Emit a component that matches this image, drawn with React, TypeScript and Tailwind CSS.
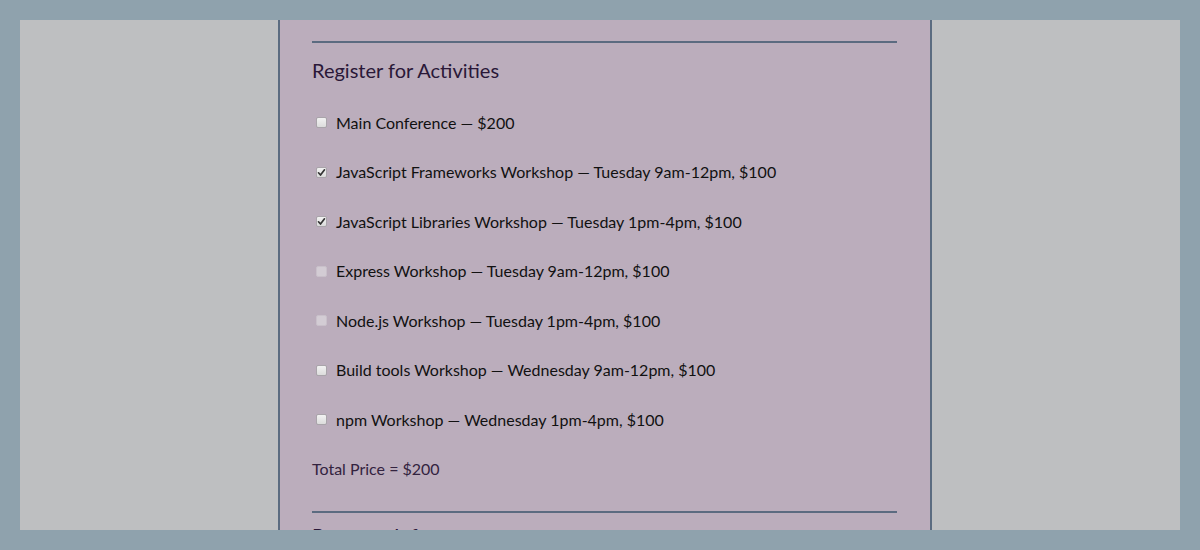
import React from "react";

const items: { label: string; checked?: boolean; disabled?: boolean }[] = [
  { label: "Main Conference — $200" },
  { label: "JavaScript Frameworks Workshop — Tuesday 9am-12pm, $100", checked: true },
  { label: "JavaScript Libraries Workshop — Tuesday 1pm-4pm, $100", checked: true },
  { label: "Express Workshop — Tuesday 9am-12pm, $100", disabled: true },
  { label: "Node.js Workshop — Tuesday 1pm-4pm, $100", disabled: true },
  { label: "Build tools Workshop — Wednesday 9am-12pm, $100" },
  { label: "npm Workshop — Wednesday 1pm-4pm, $100" },
];

function Box({ checked, disabled }: { checked?: boolean; disabled?: boolean }) {
  return (
    <span
      className={
        "relative flex h-[11px] w-[11px] shrink-0 items-center justify-center rounded-[2px] border " +
        (disabled
          ? "border-[#c9c0ca] bg-[#d3ccd4]"
          : "border-[#a9a4aa] bg-gradient-to-b from-[#f2f2f2] to-[#dcdcdc]")
      }
    >
      {checked && (
        <svg width="9" height="9" viewBox="0 0 9 9" className="block">
          <path d="M1.5 4.8 L3.5 7 L7.5 1.8" stroke="#333" strokeWidth="1.7" fill="none" strokeLinecap="round" strokeLinejoin="round" />
        </svg>
      )}
    </span>
  );
}

export default function App() {
  return (
    <div
      className="h-[550px] w-[1200px] overflow-hidden bg-[#8fa2ad] p-[20px]"
      style={{ fontFamily: "Lato, 'Open Sans', sans-serif" }}
    >
      <div className="flex h-full justify-center overflow-hidden bg-[#bebfc1] pl-[258px] pr-[248px]">
        <div className="w-[654px] shrink-0 border-x-2 border-[#5b6b80] bg-[#bbadbc] px-[32px] pt-[21px]">
          <div className="mr-[1px] h-[2px] bg-[#5b6b80]" />
          <h2 className="mt-[13px] text-[20px] leading-[28px] text-[#2a1838]">Register for Activities</h2>
          <div className="mt-[14px] flex flex-col">
            {items.map((it) => (
              <label key={it.label} className="flex h-[49.5px] items-center gap-[9px] pl-[4px]">
                <Box checked={it.checked} disabled={it.disabled} />
                <span className="text-[16px] text-[#111]">{it.label}</span>
              </label>
            ))}
          </div>
          <p className="mt-[12px] text-[16px] leading-[24px] text-[#33233f]">Total Price = $200</p>
          <div className="mr-[1px] mt-[30px] h-[2px] bg-[#5b6b80]" />
          <h2 className="mt-[8px] text-[20px] leading-[28px] text-[#2a1838]">Payment Info</h2>
        </div>
      </div>
    </div>
  );
}
